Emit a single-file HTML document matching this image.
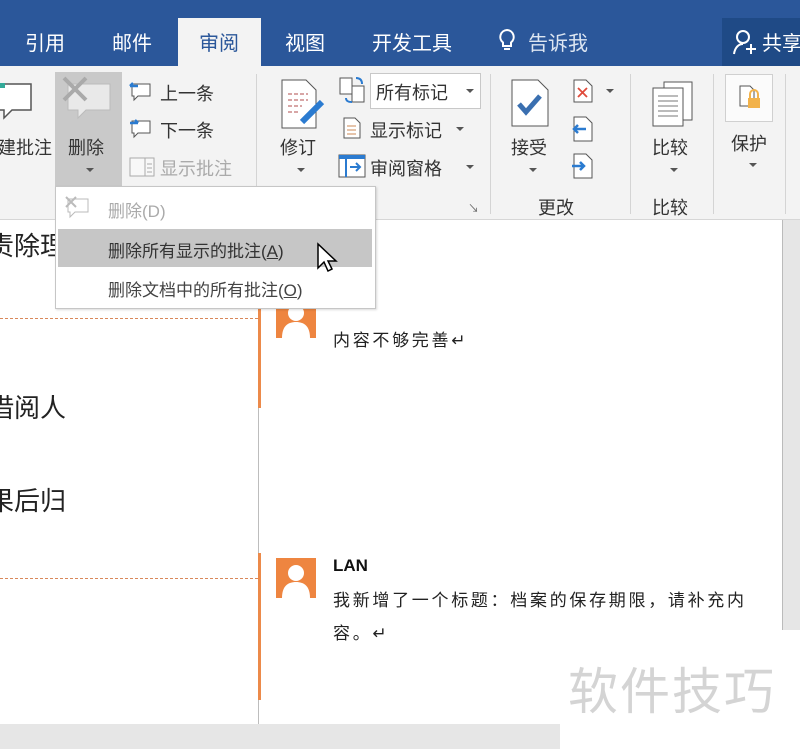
<!DOCTYPE html>
<html><head><meta charset="utf-8">
<style>
*{margin:0;padding:0;box-sizing:border-box}
body{width:800px;height:749px;overflow:hidden;position:relative;background:#fff;font-family:"Liberation Sans","Noto Sans CJK SC",sans-serif;color:#333}
.a{position:absolute;white-space:nowrap}
.tab{position:absolute;top:27px;font-size:20px;color:#fff;white-space:nowrap}
.rb{font-size:18px;color:#333}
.sep{position:absolute;top:74px;width:1px;height:140px;background:#d4d4d4}
.arr{position:absolute;width:0;height:0;border-left:4px solid transparent;border-right:4px solid transparent;border-top:4px solid #555}
.cm{font-size:17px;color:#222;letter-spacing:2.7px}
</style></head><body>
<!-- header -->
<div class="a" style="left:0;top:0;width:800px;height:66px;background:#2b579a"></div>
<div class="a" style="left:722px;top:18px;width:78px;height:48px;background:#1f4a86"></div>
<div class="a" style="left:178px;top:18px;width:83px;height:50px;background:#f3f3f3"></div>
<div class="tab" style="left:25px">引用</div>
<div class="tab" style="left:112px">邮件</div>
<div class="tab" style="left:199px;color:#2b579a">审阅</div>
<div class="tab" style="left:285px">视图</div>
<div class="tab" style="left:372px">开发工具</div>
<svg class="a" style="left:498px;top:28px" width="18" height="26" viewBox="0 0 18 26"><path d="M9 2a7 7 0 0 0-4 12.5V18h8v-3.5A7 7 0 0 0 9 2z M6 21h6" fill="none" stroke="#fff" stroke-width="2"/></svg>
<div class="tab" style="left:528px;color:#dde6f2">告诉我</div>
<svg class="a" style="left:732px;top:28px" width="26" height="28"><circle cx="11" cy="9" r="6" fill="none" stroke="#fff" stroke-width="2"/><path d="M2 26c1-7 5-10 9-10" fill="none" stroke="#fff" stroke-width="2"/><path d="M19 16v10M14 21h10" stroke="#fff" stroke-width="2"/></svg>
<div class="tab" style="left:762px">共享</div>
<!-- ribbon -->
<div class="a" style="left:0;top:66px;width:800px;height:154px;background:#f3f3f3"></div>
<div class="a" style="left:0;top:219px;width:800px;height:1px;background:#d6d6d6"></div>
<svg class="a" style="left:0;top:80px" width="36" height="40"><path d="M-5 4h36v26H12l-8 8v-8h-9" fill="#fff" stroke="#555" stroke-width="1.5"/><rect x="0" y="3" width="5" height="5" fill="#3a9"/></svg>
<div class="a rb" style="left:-2px;top:134px">建批注</div>
<div class="a" style="left:55px;top:72px;width:67px;height:114px;background:#c9c9c9"></div>
<svg class="a" style="left:60px;top:76px" width="56" height="44"><path d="M8 8h42v26H26l-8 8v-8H8z" fill="#e9e9e9" stroke="#bbb"/><path d="M4 2l22 22M26 2L4 24" stroke="#aaa" stroke-width="4"/></svg>
<div class="a rb" style="left:68px;top:134px">删除</div>
<div class="arr" style="left:86px;top:168px"></div>
<svg class="a" style="left:128px;top:80px" width="26" height="22"><path d="M4 4h18v12H10l-4 4v-4H4z" fill="#fff" stroke="#555"/><path d="M2 6h8M2 6l3-3" stroke="#2b7bd0" stroke-width="2.5"/></svg>
<div class="a rb" style="left:160px;top:80px">上一条</div>
<svg class="a" style="left:128px;top:117px" width="26" height="22"><path d="M4 4h18v12H10l-4 4v-4H4z" fill="#fff" stroke="#555"/><path d="M2 6h8M10 6l-3-3" stroke="#2b7bd0" stroke-width="2.5"/></svg>
<div class="a rb" style="left:160px;top:117px">下一条</div>
<svg class="a" style="left:129px;top:156px" width="26" height="22"><rect x="1" y="2" width="24" height="18" fill="#f8f8f8" stroke="#aaa"/><path d="M16 2v18M18 8h5M18 12h5M18 16h5" stroke="#aaa"/></svg>
<div class="a rb" style="left:160px;top:155px;color:#aaa">显示批注</div>
<div class="sep" style="left:256px"></div>
<svg class="a" style="left:280px;top:78px" width="46" height="52"><path d="M2 2h24l10 10v38H2z" fill="#fff" stroke="#555"/><path d="M8 16h20M8 22h20M8 28h14M8 34h10" stroke="#c88" stroke-width="1.5" stroke-dasharray="4 2"/><path d="M22 44l20-20" stroke="#2b7bd0" stroke-width="6"/></svg>
<div class="a rb" style="left:280px;top:134px">修订</div>
<div class="arr" style="left:297px;top:168px"></div>
<svg class="a" style="left:338px;top:74px" width="30" height="30"><rect x="2" y="4" width="12" height="16" fill="#fff" stroke="#555"/><rect x="14" y="12" width="12" height="16" fill="#fff" stroke="#555"/><path d="M8 24c0 4 4 4 6 4M18 4c4 0 6 2 6 6" stroke="#2b7bd0" stroke-width="2" fill="none"/></svg>
<div class="a" style="left:370px;top:73px;width:111px;height:36px;background:#fff;border:1px solid #c8c8c8"></div>
<div class="a rb" style="left:376px;top:79px">所有标记</div>
<div class="arr" style="left:466px;top:89px"></div>
<svg class="a" style="left:342px;top:116px" width="20" height="24"><path d="M2 2h11l5 5v15H2z" fill="#fff" stroke="#555"/><path d="M5 10h9M5 14h9M5 18h9" stroke="#c85"/></svg>
<div class="a rb" style="left:370px;top:117px">显示标记</div>
<div class="arr" style="left:456px;top:127px"></div>
<svg class="a" style="left:338px;top:153px" width="28" height="26"><rect x="1" y="2" width="26" height="22" fill="#fff" stroke="#555"/><rect x="1" y="2" width="26" height="4" fill="#2b7bd0"/><path d="M8 6v18M12 14h10M18 10l4 4-4 4" stroke="#2b7bd0" stroke-width="2" fill="none"/></svg>
<div class="a rb" style="left:370px;top:155px">审阅窗格</div>
<div class="arr" style="left:466px;top:165px"></div>
<div class="a" style="left:468px;top:200px;font-size:11px;color:#666">↘</div>
<div class="sep" style="left:490px"></div>
<svg class="a" style="left:510px;top:78px" width="40" height="50"><path d="M2 2h26l10 10v36H2z" fill="#fff" stroke="#555"/><path d="M9 26l7 8 14-16" stroke="#3a6fb0" stroke-width="5" fill="none"/></svg>
<div class="a rb" style="left:511px;top:134px">接受</div>
<div class="arr" style="left:529px;top:168px"></div>
<svg class="a" style="left:572px;top:78px" width="22" height="26"><path d="M2 2h12l6 6v16H2z" fill="#fff" stroke="#555"/><path d="M6 10l9 9M15 10l-9 9" stroke="#e04a3a" stroke-width="1.8"/></svg>
<div class="arr" style="left:606px;top:89px"></div>
<svg class="a" style="left:570px;top:115px" width="24" height="28"><path d="M4 2h12l6 6v18H4z" fill="#fff" stroke="#555"/><path d="M16 14H4M8 10l-4 4 4 4" stroke="#2b7bd0" stroke-width="2.5" fill="none"/></svg>
<svg class="a" style="left:570px;top:152px" width="24" height="28"><path d="M4 2h12l6 6v18H4z" fill="#fff" stroke="#555"/><path d="M2 14h12M10 10l4 4-4 4" stroke="#2b7bd0" stroke-width="2.5" fill="none"/></svg>
<div class="a rb" style="left:538px;top:194px">更改</div>
<div class="sep" style="left:630px"></div>
<svg class="a" style="left:650px;top:80px" width="46" height="48"><rect x="14" y="2" width="28" height="38" fill="#fff" stroke="#555"/><rect x="3" y="8" width="30" height="38" fill="#fff" stroke="#555"/><path d="M8 16h20M8 21h20M8 26h20M8 31h20M8 36h20" stroke="#777"/></svg>
<div class="a rb" style="left:652px;top:134px">比较</div>
<div class="arr" style="left:670px;top:168px"></div>
<div class="a rb" style="left:652px;top:194px">比较</div>
<div class="sep" style="left:713px"></div>
<div class="a" style="left:725px;top:74px;width:48px;height:48px;background:#fbfbfb;border:1px solid #d0d0d0"></div>
<svg class="a" style="left:738px;top:84px" width="26" height="28"><path d="M2 2h10l4 4v16H2z" fill="#fff" stroke="#555"/><rect x="10" y="14" width="12" height="10" fill="#f2b24a"/><path d="M12 14v-4a4 4 0 0 1 8 0v4" fill="none" stroke="#f2b24a" stroke-width="2"/></svg>
<div class="a rb" style="left:731px;top:130px">保护</div>
<div class="arr" style="left:749px;top:163px"></div>
<div class="sep" style="left:785px"></div>
<!-- document -->
<div class="a" style="left:258px;top:220px;width:1px;height:504px;background:#bdbdbd"></div>
<div class="a" style="left:782px;top:220px;width:18px;height:410px;background:#e6e6e6;border-left:1px solid #bbb"></div>
<div class="a" style="left:0;top:724px;width:560px;height:25px;background:#e6e6e6"></div>
<div class="a" style="left:-12px;top:226px;font-size:26px;color:#222">责除理</div>
<div class="a" style="left:-12px;top:388px;font-size:26px;color:#222">借阅人</div>
<div class="a" style="left:-12px;top:481px;font-size:26px;color:#222">果后归</div>
<div class="a" style="left:0;top:318px;width:258px;border-top:1px dashed #d9885a"></div>
<div class="a" style="left:0;top:578px;width:258px;border-top:1px dashed #d9885a"></div>
<div class="a" style="left:258px;top:305px;width:3px;height:103px;background:#ec8a4a"></div>
<div class="a" style="left:258px;top:553px;width:3px;height:147px;background:#ec8a4a"></div>
<svg class="a" style="left:276px;top:298px" width="40" height="40"><rect width="40" height="40" fill="#ee8540"/><circle cx="20" cy="15" r="8" fill="#fff"/><path d="M6 40c0-12 6-16 14-16s14 4 14 16z" fill="#fff"/></svg>
<div class="a cm" style="left:333px;top:326px">内容不够完善↵</div>
<svg class="a" style="left:276px;top:558px" width="40" height="40"><rect width="40" height="40" fill="#ee8540"/><circle cx="20" cy="15" r="8" fill="#fff"/><path d="M6 40c0-12 6-16 14-16s14 4 14 16z" fill="#fff"/></svg>
<div class="a" style="left:333px;top:556px;font-size:17px;font-weight:bold;color:#111">LAN</div>
<div class="a cm" style="left:333px;top:586px">我新增了一个标题：档案的保存期限，请补充内</div>
<div class="a cm" style="left:333px;top:619px">容。↵</div>
<!-- dropdown -->
<div class="a" style="left:55px;top:186px;width:321px;height:123px;background:#fff;border:1px solid #c6c6c6;box-shadow:1px 1px 2px rgba(0,0,0,.15)"></div>
<svg class="a" style="left:63px;top:194px" width="28" height="26"><path d="M5 5h20v13H12l-5 5v-5H5z" fill="none" stroke="#bbb"/><path d="M3 3l10 10M13 3L3 13" stroke="#bbb" stroke-width="2"/></svg>
<div class="a" style="left:108px;top:197px;font-size:17px;color:#aaa">删除(D)</div>
<div class="a" style="left:58px;top:229px;width:314px;height:38px;background:#c6c6c6"></div>
<div class="a" style="left:108px;top:237px;font-size:17px;color:#333">删除所有显示的批注(<u>A</u>)</div>
<div class="a" style="left:108px;top:276px;font-size:17px;color:#444">删除文档中的所有批注(<u>O</u>)</div>
<svg class="a" style="left:316px;top:242px" width="22" height="32"><path d="M2 2v24l6-6 4 9 4-2-4-8h8z" fill="#fff" stroke="#000" stroke-width="1.5"/></svg>
<!-- watermark -->
<div class="a" style="left:560px;top:632px;width:240px;height:117px;background:#fff"></div>
<div class="a" style="left:568px;top:652px;font-size:50px;color:#d4d4d4;letter-spacing:2px">软件技巧</div>
</body></html>
